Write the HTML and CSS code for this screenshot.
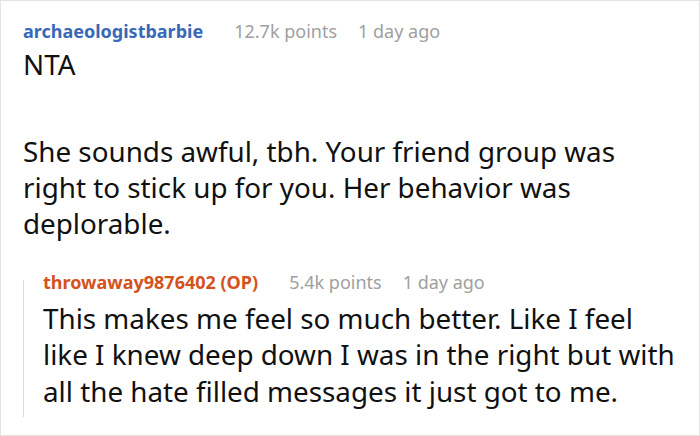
FILE: index.html
```html
<!DOCTYPE html>
<html lang="en">
<head>
    <meta charset="UTF-8">
    <title>Comment thread</title>
    <link rel="stylesheet" href="styles.css">
</head>
<body>
    <div class="thread">
        <div class="comment">
            <div class="meta">
                <span class="author">archaeologistbarbie</span>
                <span class="points">12.7k points</span>
                <span class="time">1 day ago</span>
            </div>
            <div class="body">
                <p>NTA</p>
                <p>She sounds awful, tbh. Your friend group was right to stick up for you. Her behavior was deplorable.</p>
            </div>

            <div class="reply">
                <div class="reply-rule"></div>
                <div class="reply-content">
                    <div class="meta">
                        <span class="author op">throwaway9876402 (OP)</span>
                        <span class="points">5.4k points</span>
                        <span class="time">1 day ago</span>
                    </div>
                    <div class="body">
                        <p>This makes me feel so much better. Like I feel like I knew deep down I was in the right but with all the hate filled messages it just got to me.</p>
                    </div>
                </div>
            </div>
        </div>
    </div>
</body>
</html>
```

FILE: styles.css
```css
html, body {
    margin: 0;
    padding: 0;
}
body {
    background: #fff;
    font-family: "Noto Sans", "Open Sans", sans-serif;
    color: #111;
}
.thread {
    width: 700px;
    height: 436px;
    box-sizing: border-box;
    border: 1px solid #e3e3e3;
    overflow: hidden;
}
.comment {
    padding: 15.5px 16px 0 22px;
}
.meta {
    display: flex;
    align-items: baseline;
    gap: 21px;
    font-size: 18px;
    line-height: 29px;
}
.author {
    font-weight: 700;
    color: #3868b8;
    margin-right: 10px;
}
.author.op {
    color: #d4521c;
}
.points,
.time {
    color: #a0a0a0;
}
.body {
    font-size: 27.8px;
    line-height: 36.3px;
}
.body p {
    margin: 0;
}
.comment > .body p + p {
    margin-top: 51px;
}
.reply {
    display: flex;
    margin-top: 26.5px;
}
.reply-rule {
    width: 1px;
    flex: none;
    background: #dcdcdc;
    margin: 12px 0 -8px;
}
.reply-content {
    flex: 1;
    padding-left: 19px;
}
.reply .body {
    margin-top: 3px;
}
```
